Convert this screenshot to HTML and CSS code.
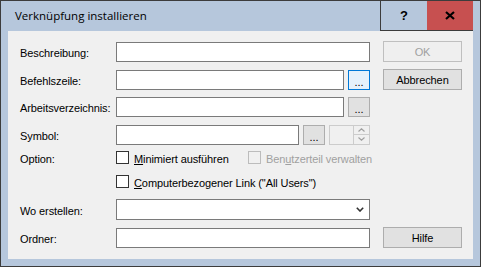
FILE: index.html
```html
<!DOCTYPE html>
<html>
  <head>
    <meta charset="UTF-8" />
    <title>Verknüpfung installieren</title>
    <link rel="stylesheet" href="styles.css">
  </head>

  <body>
    <div class="window">
      <div class="titlebar">
        <span class="title">Verknüpfung installieren</span>
        <div class="caption-btn help">?</div>
        <div class="caption-btn close">
          <svg width="10" height="9" viewBox="0 0 10 9">
            <path d="M1 1 L9 8 M9 1 L1 8" stroke="#000" stroke-width="2.2" fill="none" />
          </svg>
        </div>
      </div>

      <div class="client">
        <div class="row">
          <label class="caption">Beschreibung:</label>
          <input class="edit wide" type="text" />
          <button class="button disabled">OK</button>
        </div>

        <div class="row">
          <label class="caption">Befehlszeile:</label>
          <input class="edit mid" type="text" />
          <button class="dots focused">...</button>
          <button class="button">Abbrechen</button>
        </div>

        <div class="row">
          <label class="caption">Arbeitsverzeichnis:</label>
          <input class="edit mid" type="text" />
          <button class="dots">...</button>
        </div>

        <div class="row">
          <label class="caption">Symbol:</label>
          <input class="edit short" type="text" />
          <button class="dots">...</button>
          <div class="spinner">
            <div class="spin-field"></div>
            <div class="spin-buttons">
              <span class="spin-btn">
                <svg width="7" height="4" viewBox="0 0 7 4"><path d="M0.5 3.5 L3.5 0.8 L6.5 3.5" stroke="#a0a0a0" stroke-width="1.2" fill="none" /></svg>
              </span>
              <span class="spin-btn">
                <svg width="7" height="4" viewBox="0 0 7 4"><path d="M0.5 0.5 L3.5 3.2 L6.5 0.5" stroke="#a0a0a0" stroke-width="1.2" fill="none" /></svg>
              </span>
            </div>
          </div>
        </div>

        <div class="row check-row">
          <label class="caption">Option:</label>
          <div class="option first">
            <span class="box"></span>
            <span class="option-text"><u>M</u>inimiert ausführen</span>
          </div>
          <div class="option disabled-option">
            <span class="box"></span>
            <span class="option-text">Ben<u>u</u>tzerteil verwalten</span>
          </div>
        </div>

        <div class="row check-row">
          <label class="caption"></label>
          <div class="option">
            <span class="box"></span>
            <span class="option-text"><u>C</u>omputerbezogener Link ("All Users")</span>
          </div>
        </div>

        <div class="row">
          <label class="caption">Wo erstellen:</label>
          <div class="combo">
            <svg width="8" height="5" viewBox="0 0 8 5"><path d="M0.8 0.8 L4 4 L7.2 0.8" stroke="#333" stroke-width="1.6" fill="none" /></svg>
          </div>
        </div>

        <div class="row">
          <label class="caption">Ordner:</label>
          <input class="edit wide" type="text" />
          <button class="button">Hilfe</button>
        </div>
      </div>
    </div>
  </body>
</html>
```

FILE: styles.css
```css
body {
  margin: 0;
  font-family: "Liberation Sans", Arial, sans-serif;
  font-size: 11px;
  letter-spacing: -0.1px;
  color: #000;
}

.window {
  width: 481px;
  height: 267px;
  box-sizing: border-box;
  border: 1px solid #3c3c3c;
  background-color: #b6c7dc;
  padding: 0 7px 7px 7px;
  display: flex;
  flex-direction: column;
}

.titlebar {
  height: 30px;
  display: flex;
  align-items: stretch;
}

.title {
  flex: 1;
  padding-left: 7px;
  font-family: "Open Sans", "Noto Sans", sans-serif;
  font-size: 11.5px;
  letter-spacing: 0;
  line-height: 29px;
  color: #000;
}

.caption-btn {
  box-sizing: border-box;
  height: 30px;
  border-bottom: 1px solid #3c3c3c;
  display: flex;
  align-items: center;
  justify-content: center;
}

.help {
  width: 47px;
  border-left: 1px solid #3c3c3c;
  font-weight: bold;
  font-size: 13px;
}

.close {
  width: 46px;
  background-color: #c75050;
}

.client {
  flex: 1;
  background-color: #f0f0f0;
  padding: 10px 0 0 12px;
  display: flex;
  flex-direction: column;
}

.row {
  display: flex;
  align-items: center;
  height: 21px;
  margin-bottom: 7px;
}

.row:nth-child(2) {
  margin-bottom: 6px;
}

.row:nth-child(4) {
  margin-bottom: 6px;
}

.check-row {
  height: 13px;
  margin-bottom: 11px;
}

.caption {
  width: 96px;
  flex-shrink: 0;
  padding-top: 3px;
}

.edit {
  box-sizing: border-box;
  height: 20px;
  margin: 0;
  padding: 0;
  border: 1px solid #7a7a7a;
  background-color: #fff;
  outline: none;
}

.wide {
  width: 254px;
}

.mid {
  width: 228px;
}

.short {
  width: 183px;
}

.button {
  box-sizing: border-box;
  width: 79px;
  height: 21px;
  margin: 0 0 0 13px;
  padding: 0;
  border: 1px solid #adadad;
  background-color: #e1e1e1;
  font-family: "Liberation Sans", Arial, sans-serif;
  font-size: 11px;
  letter-spacing: -0.1px;
  color: #000;
}

.button.disabled {
  border-color: #bfbfbf;
  background-color: #efefef;
  color: #a0a0a0;
}

.dots {
  box-sizing: border-box;
  width: 22px;
  height: 20px;
  margin: 0 0 0 4px;
  padding: 4px 0 0 0;
  border: 1px solid #adadad;
  background-color: #e1e1e1;
  font-family: "Liberation Sans", Arial, sans-serif;
  font-size: 11px;
  color: #000;
}

.dots.focused {
  border-color: #0078d7;
  background-color: #e5f1fb;
}

.spinner {
  box-sizing: border-box;
  width: 41px;
  height: 20px;
  margin-left: 4px;
  border: 1px solid #cccccc;
  background-color: #f0f0f0;
  display: flex;
}

.spin-field {
  flex: 1;
}

.spin-buttons {
  width: 16px;
  display: flex;
  flex-direction: column;
}

.spin-btn {
  flex: 1;
  border-left: 1px solid #cccccc;
  display: flex;
  align-items: center;
  justify-content: center;
}

.spin-btn + .spin-btn {
  border-top: 1px solid #cccccc;
}

.option {
  display: flex;
  align-items: center;
}

.option.first {
  width: 132px;
}

.box {
  box-sizing: border-box;
  width: 13px;
  height: 13px;
  border: 1px solid #333;
  background-color: #fff;
  flex-shrink: 0;
}

.option-text {
  margin-left: 5px;
  padding-top: 3px;
  white-space: nowrap;
}

.disabled-option .box {
  border-color: #bcbcbc;
  background-color: #f0f0f0;
}

.disabled-option .option-text {
  color: #a0a0a0;
}

.combo {
  box-sizing: border-box;
  width: 254px;
  height: 21px;
  border: 1px solid #7a7a7a;
  background-color: #fff;
  display: flex;
  align-items: center;
  justify-content: flex-end;
  padding-right: 5px;
}
```
